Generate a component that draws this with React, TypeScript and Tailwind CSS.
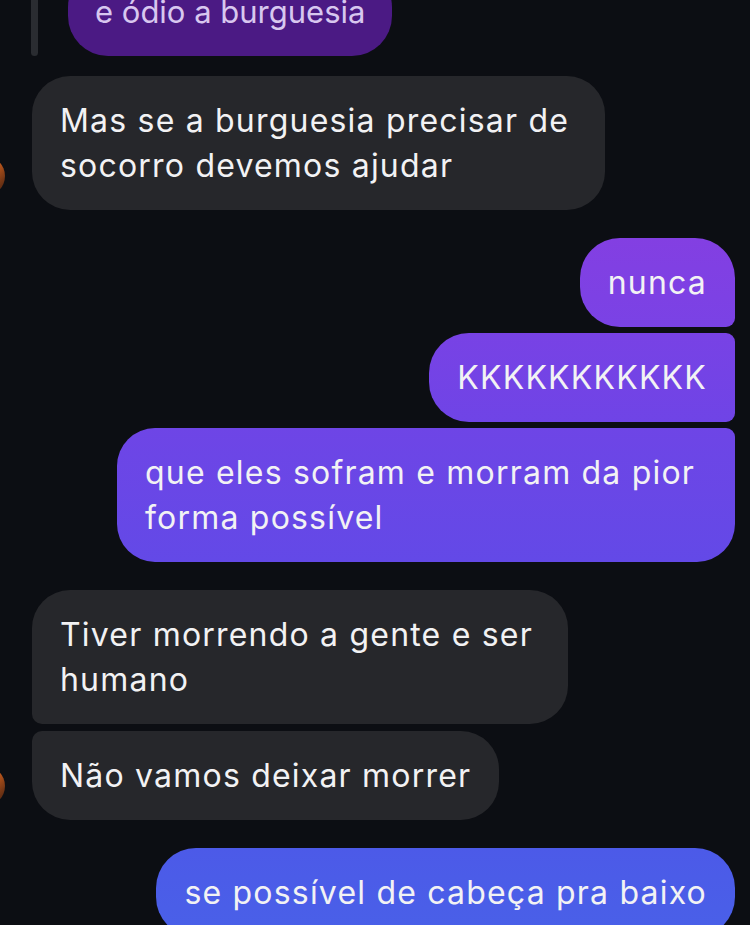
import React from "react"

const font = { fontFamily: "Inter, 'Noto Sans', sans-serif" }

const Avatar = () => (
  <div className="w-[40px] h-[40px] -ml-[67px] mr-[27px] mb-[14px] shrink-0 rounded-full bg-gradient-to-br from-[#f59a3a] via-[#c25a1c] to-[#3a1a0c]" />
)

export default function App() {
  return (
    <div
      className="w-[750px] h-[925px] overflow-hidden bg-[#0c0e13] text-[32px] leading-[45px] tracking-[1.2px] text-[#f2f2f4] flex flex-col"
      style={font}
    >
      {/* reply preview */}
      <div className="flex flex-row items-stretch pl-[31px] -mt-[33px]">
        <div className="w-[7px] rounded-full bg-[#2a2c31]" />
        <div className="ml-[30px] bg-[#4b1a84] text-[#d8c7ef] text-[31px] tracking-normal rounded-[40px] px-[27px] py-[22px] whitespace-nowrap">
          e ódio a burguesia
        </div>
      </div>

      {/* incoming */}
      <div className="flex flex-row items-end pl-[32px] mt-[20px]">
        <Avatar />
        <div className="w-[573px] bg-[#26272b] rounded-[38px] px-[28px] py-[22px] whitespace-nowrap">
          Mas se a burguesia precisar de<br />socorro devemos ajudar
        </div>
      </div>

      {/* outgoing */}
      <div className="flex flex-col items-end pr-[15px] mt-[28px] gap-[6px]">
        <div className="bg-gradient-to-b from-[#833fe2] to-[#7a42e5] rounded-[40px] rounded-br-[9px] px-[28px] py-[22px] whitespace-nowrap">
          nunca
        </div>
        <div className="bg-gradient-to-b from-[#7842e5] to-[#6f44e6] rounded-[40px] rounded-r-[9px] px-[28px] py-[22px] whitespace-nowrap">
          KKKKKKKKKKK
        </div>
        <div className="w-[618px] bg-gradient-to-b from-[#6e45e6] to-[#6349e7] rounded-[38px] rounded-tr-[9px] px-[28px] py-[22px] whitespace-nowrap">
          que eles sofram e morram da pior<br />forma possível
        </div>
      </div>

      {/* incoming group */}
      <div className="flex flex-col items-start pl-[32px] mt-[28px] gap-[7px]">
        <div className="w-[536px] bg-[#26272b] rounded-[38px] rounded-bl-[10px] px-[28px] py-[22px] whitespace-nowrap">
          Tiver morrendo a gente e ser<br />humano
        </div>
        <div className="flex flex-row items-end">
          <Avatar />
          <div className="bg-[#26272b] rounded-[38px] rounded-tl-[10px] px-[28px] py-[22px] whitespace-nowrap">
            Não vamos deixar morrer
          </div>
        </div>
      </div>

      {/* outgoing last */}
      <div className="flex flex-col items-end pr-[15px] mt-[28px]">
        <div className="bg-gradient-to-b from-[#4c5ae8] to-[#4960e8] rounded-[40px] px-[28px] py-[22px] whitespace-nowrap">
          se possível de cabeça pra baixo
        </div>
      </div>
    </div>
  )
}
